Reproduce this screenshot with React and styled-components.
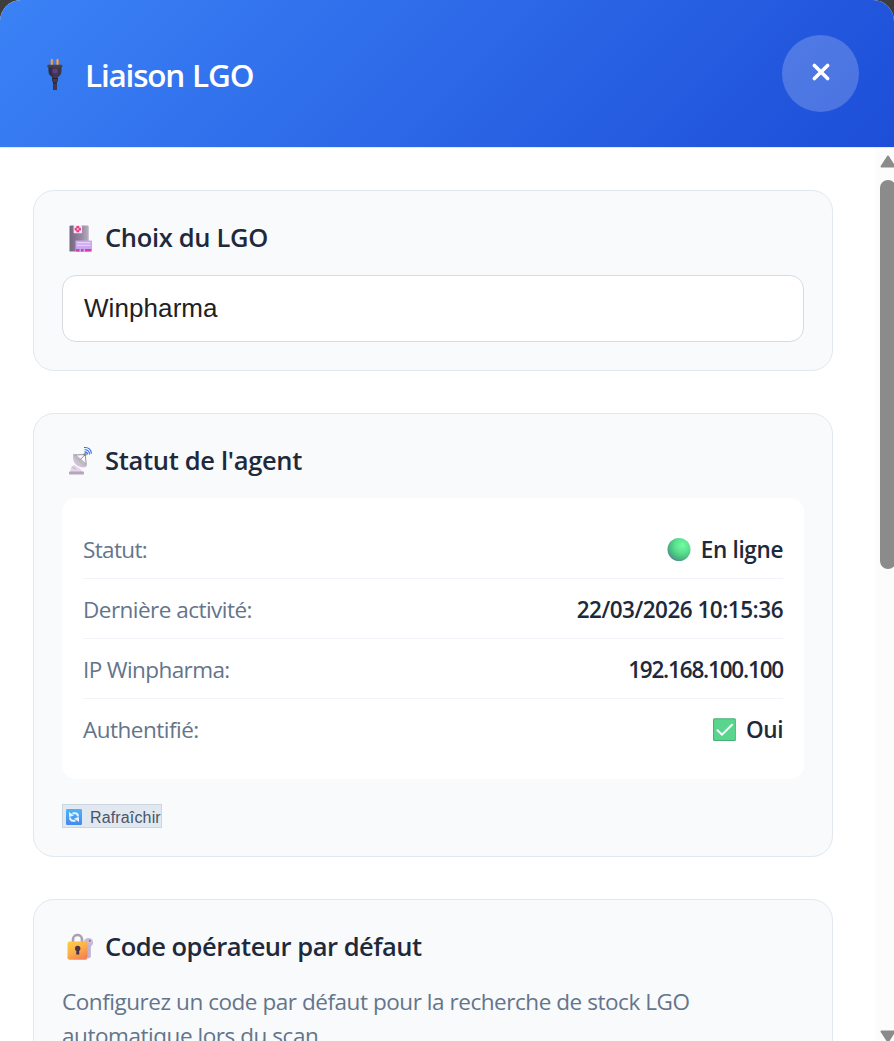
import * as React from 'react'
import styled, { createGlobalStyle } from 'styled-components'

const STATUS = [
    { label: 'Statut:', value: 'En ligne', icon: 'online', labelSpacing: -0.65, spacing: -0.35 },
    { label: 'Dernière activité:', value: '22/03/2026 10:15:36', labelSpacing: -0.53, spacing: -0.5 },
    { label: 'IP Winpharma:', value: '192.168.100.100', labelSpacing: -0.6, spacing: -1.2 },
    { label: 'Authentifié:', value: 'Oui', icon: 'check', labelSpacing: -0.5, spacing: -0.4 },
]

const PlugIcon = () => (
    <svg width="16" height="32" viewBox="0 0 16 32">
        <defs>
            <linearGradient id="prong" x1="0" x2="1">
                <stop offset="0" stopColor="#c98a55" />
                <stop offset=".5" stopColor="#eeb072" />
                <stop offset="1" stopColor="#a9764f" />
            </linearGradient>
            <linearGradient id="plug" x1="0" x2="1">
                <stop offset="0" stopColor="#2d2733" />
                <stop offset=".5" stopColor="#453650" />
                <stop offset="1" stopColor="#3a363d" />
            </linearGradient>
        </defs>
        <rect x="3.600" y="1" width="2.800" height="7" rx="1" fill="url(#prong)" />
        <rect x="9.200" y="1" width="2.800" height="7" rx="1" fill="url(#prong)" />
        <path d="M1.500 8H14.500v5c0 3-1.500 5-3.500 6v4l-1 1.500V32H6v-7.500l-1-1.500v-4c-2-1-3.500-3-3.500-6z" fill="url(#plug)" />
        <rect x="0.300" y="6.800" width="15" height="2.700" rx="1" fill="#443f4c" />
        <rect x="5.500" y="11" width="5" height="4.200" rx=".6" fill="#5c3b91" />
        <path d="M5 20.500h6M6 25h4" stroke="#211d27" strokeWidth=".8" />
    </svg>
)

const HospitalIcon = () => (
    <svg width="32" height="32" viewBox="0 0 32 32">
        <defs>
            <linearGradient id="tower" x1="0" x2="1">
                <stop offset="0" stopColor="#756681" />
                <stop offset=".6" stopColor="#94879e" />
                <stop offset="1" stopColor="#b9afbd" />
            </linearGradient>
        </defs>
        <path d="M7.500 4.500l1-1H26l.700 1V29.500H7.500z" fill="url(#tower)" />
        <rect x="11.600" y="3" width="8.400" height="8.300" rx=".8" fill="#f4e7fa" />
        <path d="M14.400 4h2.800v1.700h1.700v2.800h-1.700v1.700h-2.800V8.500h-1.700V5.700h1.700z" fill="#ee397b" />
        <circle cx="15.800" cy="7.100" r="1.200" fill="#f9aecb" />
        <rect x="13.500" y="18.500" width="16.500" height="11" rx=".8" fill="#cba7ee" />
        <path d="M15 20.600h13.500M15 23.400h13.500" stroke="#e8d0fb" strokeWidth="1.200" />
        <path d="M14 29.500v-2.500h3.500v2.500zM19 29.500v-2.500h2.500v2.500zM23 29.500v-2.500h6.300v2.500z" fill="#d63bb9" />
    </svg>
)

const DishIcon = () => (
    <svg width="32" height="32" viewBox="0 0 32 32">
        <path d="M8 27l1.500-5.500 3-1.500 5.500 4 3 3z" fill="#e0d6e6" />
        <path d="M10.500 22l3 2" stroke="#b8a8c1" />
        <rect x="7" y="26.500" width="15" height="3" rx=".8" fill="#b9a4bf" />
        <path d="M11.500 9c-2 6 1.500 13 10 13.500 2 0 3-1 3.200-2z" fill="#cfc0d6" />
        <path d="M11 9.800c.5-1.500 2-1 3 0l9.500 8c1 1 1.500 2 1 3-1 1.200-3.500 0-7-3s-6.500-6.500-6.500-8z" fill="#c0b8c1" />
        <path d="M13 10l10.300-.5.900 10M18 14.800l5-5" fill="none" stroke="#99919b" strokeWidth="1" />
        <circle cx="23" cy="9.500" r="1.600" fill="#8b818f" />
        <path d="M22.500 6.900c2 0 3 1 3 2.700M22.500 4.700c3.300-.2 5 2 5 4.700M22 2.500c4.700-.5 7.300 2 7.300 6.200" fill="none" stroke="#3469e8" strokeWidth="1.100" />
    </svg>
)

const LockIcon = () => (
    <svg width="32" height="32" viewBox="0 0 32 32">
        <defs>
            <linearGradient id="lock" x1="0" y1="0" x2=".6" y2="1">
                <stop offset="0" stopColor="#ffcd45" />
                <stop offset=".5" stopColor="#fdb248" />
                <stop offset="1" stopColor="#f58555" />
            </linearGradient>
        </defs>
        <circle cx="26.500" cy="11.500" r="4.600" fill="#c9b9d7" />
        <path d="M25 14h3.800v12l-2 1.500-2.500-1.500z" fill="#c3b1d0" />
        <circle cx="27.800" cy="9.700" r="1" fill="#83758f" />
        <path d="M11 12V8.500c0-6 9-6 9 0V12" fill="none" stroke="#aca2ae" strokeWidth="2.600" />
        <rect x="5.500" y="10.600" width="20" height="18.200" rx="2.200" fill="url(#lock)" />
        <circle cx="15.700" cy="17.400" r="2.700" fill="#493448" />
        <path d="M14.500 18h2.500l.3 5.600h-3.100z" fill="#493448" />
    </svg>
)

const StatusIcon = ({ name }) => name === 'online' ? (
    <svg width="24" height="24" viewBox="0 0 24 24">
        <defs>
            <radialGradient id="dot" cx=".65" cy=".32" r=".72">
                <stop offset="0" stopColor="#70fca0" />
                <stop offset=".45" stopColor="#5ae191" />
                <stop offset=".8" stopColor="#49ba7e" />
                <stop offset="1" stopColor="#548d91" />
            </radialGradient>
        </defs>
        <circle cx="12" cy="11.500" r="11.500" fill="url(#dot)" />
    </svg>
) : (
    <svg width="24" height="24" viewBox="0 0 24 24">
        <rect x="1" y=".3" width="23" height="22.800" rx="1.600" fill="#46b076" />
        <rect x="2" y="1.200" width="21.500" height="20.700" rx="1" fill="#59d58e" />
        <path d="M5.500 12.200l4.500 4.500L20 6.700" fill="none" stroke="#fff" strokeWidth="2" strokeLinecap="round" />
    </svg>
)

const RefreshIcon = () => (
    <svg width="16" height="16" viewBox="0 0 16 16">
        <defs>
            <linearGradient id="refresh" x1="0" y1="0" x2="0" y2="1">
                <stop offset="0" stopColor="#4eb4f6" />
                <stop offset="1" stopColor="#4589ed" />
            </linearGradient>
        </defs>
        <rect width="16" height="16" rx="1.300" fill="url(#refresh)" />
        <path d="M6.500 4.200h2.500c2 0 3 1.200 3 3.300M9.500 11.800H7c-2 0-3-1.200-3-3.300" fill="none" stroke="#e8f3ff" strokeWidth="1.900" />
        <path d="M3 3v5l5-1.500zM13 13V8l-5 1.500z" fill="#e8f3ff" />
    </svg>
)

const App = () => (
    <>
        <GlobalStyle />
        <Modal>
            <Header>
                <HeaderTitle>
                    <PlugIcon />
                    <Title>Liaison LGO</Title>
                </HeaderTitle>
                <CloseButton aria-label="Fermer">
                    <svg width="18" height="18" viewBox="0 0 18 18">
                        <path d="M2.400 2.400l13.200 13.200M15.600 2.400L2.400 15.600" stroke="#fff" strokeWidth="3.600" strokeLinecap="round" />
                    </svg>
                </CloseButton>
            </Header>
            <Body>
                <Content>
                    <Card>
                        <CardHeading><HospitalIcon /><Heading $spacing={-0.33}>Choix du LGO</Heading></CardHeading>
                        <SelectBox>Winpharma</SelectBox>
                    </Card>
                    <Card>
                        <CardHeading><DishIcon /><Heading $spacing={-0.31}>Statut de l'agent</Heading></CardHeading>
                        <InfoBox>
                            {STATUS.map(row => (
                                <InfoRow key={row.label}>
                                    <InfoLabel $spacing={row.labelSpacing}>{row.label}</InfoLabel>
                                    <InfoValue $spacing={row.spacing}>
                                        {row.icon && <StatusIcon name={row.icon} />}
                                        <span>{row.value}</span>
                                    </InfoValue>
                                </InfoRow>
                            ))}
                        </InfoBox>
                        <RefreshButton><RefreshIcon /><ButtonLabel>Rafraîchir</ButtonLabel></RefreshButton>
                    </Card>
                    <Card>
                        <CardHeading><LockIcon /><Heading $spacing={-0.48}>Code opérateur par défaut</Heading></CardHeading>
                        <Description>
                            Configurez un code par défaut pour la recherche de stock LGO<br />
                            automatique lors du scan.
                        </Description>
                    </Card>
                </Content>
                <Scrollbar>
                    <Arrow viewBox="0 0 16 13">
                        <path d="M8 1.500L14.500 11.500H1.500z" />
                    </Arrow>
                    <Thumb />
                    <Arrow viewBox="0 0 16 13">
                        <path d="M8 11.500L14.500 1.500H1.500z" />
                    </Arrow>
                </Scrollbar>
            </Body>
        </Modal>
    </>
)

const GlobalStyle = createGlobalStyle`
    * {
        box-sizing: border-box;
    }
    body {
        margin: 0;
        background: #3d3d3d;
        overflow: hidden;
        font-family: 'Open Sans', 'Noto Sans', sans-serif;
    }
    svg {
        display: block;
        flex: none;
    }
`

const Modal = styled.div`
    display: flex;
    flex-direction: column;
    height: 1041px;
    overflow: hidden;
    background: #fff;
    border-radius: 21px 21px 0 0;
`

const Header = styled.header`
    display: flex;
    flex: none;
    align-items: center;
    justify-content: space-between;
    height: 148px;
    padding: 0 35px 0 47px;
    background: linear-gradient(135deg, #3b82f6, #1d4ed8);
    border-bottom: 1px solid #e2e8f0;
`

const HeaderTitle = styled.div`
    display: flex;
    align-items: center;
    gap: 22px;
`

const Title = styled.h2`
    margin: 0;
    padding-top: 2px;
    color: #fff;
    font-size: 31.5px;
    font-weight: 600;
    line-height: 44px;
    letter-spacing: -1.2px;
    word-spacing: 1px;
`

const CloseButton = styled.button`
    display: flex;
    align-items: center;
    justify-content: center;
    width: 77px;
    height: 77px;
    padding: 0 0 3px;
    border: 0;
    border-radius: 50%;
    background: rgba(255, 255, 255, 0.2);
`

const Body = styled.div`
    display: flex;
    flex: 1;
    min-height: 0;
`

const Content = styled.main`
    display: flex;
    flex: 1;
    flex-direction: column;
    gap: 42px;
    padding: 42px 42px 0 33px;
    overflow: hidden;
`

const Card = styled.section`
    flex: none;
    padding: 28px;
    border: 1px solid #e2e8f0;
    border-radius: 21px;
    background: #f8fafc;
`

const CardHeading = styled.div`
    display: flex;
    align-items: center;
    gap: 11px;
    height: 36px;
    padding-top: 1px;
    margin-bottom: 20px;
`

const Heading = styled.h3`
    margin: 0;
    color: #1e293b;
    font-size: 25.5px;
    font-weight: 600;
    line-height: 35px;
    letter-spacing: ${props => props.$spacing}px;
    white-space: nowrap;
`

const SelectBox = styled.div`
    display: flex;
    align-items: center;
    height: 67px;
    padding: 0 21px;
    border: 1px solid #d7dbe0;
    border-radius: 14px;
    background: #fff;
    color: #212121;
    font-family: 'Liberation Sans', Arial, sans-serif;
    font-size: 26px;
    letter-spacing: 0.08px;
`

const InfoBox = styled.div`
    padding: 21px;
    border-radius: 14px;
    background: #fff;
`

const InfoRow = styled.div`
    display: flex;
    align-items: center;
    justify-content: space-between;
    height: 60px;
    padding-top: 2px;
    border-bottom: 1px solid #f1f5f9;

    &:last-child {
        height: 59px;
        border-bottom: 0;
    }
`

const InfoLabel = styled.span`
    color: #64748b;
    font-size: 22.5px;
    line-height: 30px;
    letter-spacing: ${props => props.$spacing}px;
`

const InfoValue = styled.span`
    display: flex;
    align-items: center;
    gap: 10px;
    color: #1e293b;
    font-size: 22.5px;
    font-weight: 600;
    line-height: 30px;
    letter-spacing: ${props => props.$spacing}px;
`

const RefreshButton = styled.button`
    display: flex;
    align-items: center;
    gap: 8px;
    width: 100px;
    height: 24px;
    margin-top: 25px;
    padding: 2px 0 0 3px;
    border: 1px solid #cbd5e1;
    background: #e2e8f0;
    color: #475569;
    font-family: 'Liberation Sans', Arial, sans-serif;
    font-size: 16px;
    letter-spacing: 0.15px;
    white-space: nowrap;
`

const ButtonLabel = styled.span`
    padding-top: 2px;
    line-height: 18px;
`

const Description = styled.p`
    margin: 0;
    padding-top: 1px;
    color: #64748b;
    font-size: 22.5px;
    line-height: 34px;
    letter-spacing: -0.45px;
    white-space: nowrap;
`

const Scrollbar = styled.div`
    display: flex;
    flex: none;
    flex-direction: column;
    width: 19px;
    padding: 7px 0 0 5px;
    overflow: hidden;
    background: #fcfcfc;
`

const Arrow = styled.svg`
    width: 16px;
    height: 13px;
    fill: #8b8b8b;
    stroke: #8b8b8b;
    stroke-width: 2px;
    stroke-linejoin: round;
`

const Thumb = styled.div`
    width: 16px;
    height: 389px;
    margin: 12px 0 461px;
    flex: none;
    border-radius: 8px;
    background: #8b8b8b;
`

export default App
